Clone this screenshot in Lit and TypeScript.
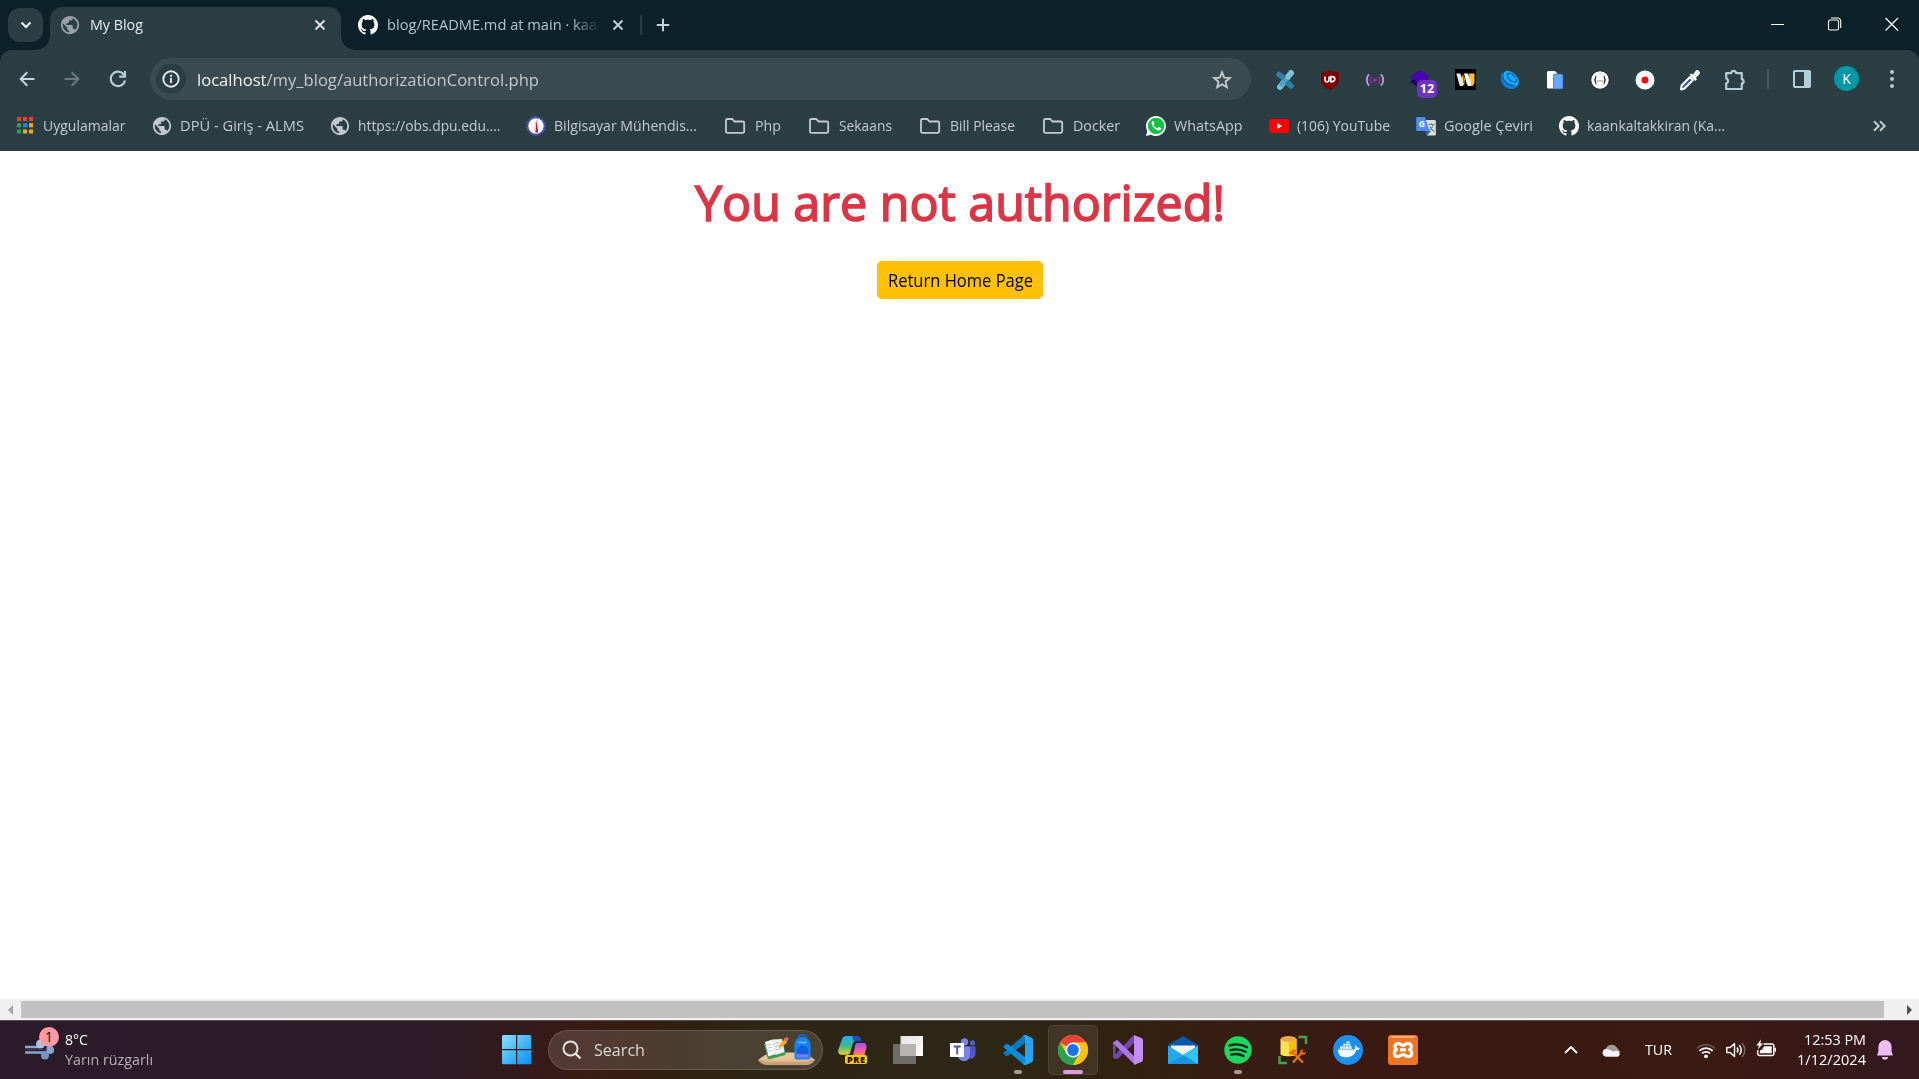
import { LitElement, html, css, svg } from "lit";

/** Single-line label whose text is condensed or expanded to a given width. */
class FitLabel extends LitElement {
  static properties = { width: { type: Number } };
  declare width: number;
  static styles = css`
    :host { display: block; white-space: nowrap; flex: none; }
    .text { display: inline-block; transform-origin: 0 50%; }
  `;
  firstUpdated() {
    const el = this.renderRoot.querySelector(".text") as HTMLElement;
    const natural = el.getBoundingClientRect().width;
    this.style.width = this.width + "px";
    if (natural) el.style.transform = `scaleX(${this.width / natural})`;
  }
  render() {
    return html`<span class="text"><slot></slot></span>`;
  }
}
customElements.define("fit-label", FitLabel);

const draw = (w: number, h: number, body: unknown, vb = `0 0 ${w} ${h}`) =>
  html`<svg width=${w} height=${h} viewBox=${vb} fill="none">${body}</svg>`;

const globe = (color: string) =>
  draw(20, 20, svg`<path fill=${color} d="M12 2C6.48 2 2 6.48 2 12s4.48 10 10 10 10-4.48 10-10S17.52 2 12 2zm-1 17.93c-3.95-.49-7-3.85-7-7.93 0-.62.08-1.21.21-1.79L9 15v1c0 1.1.9 2 2 2v1.93zm6.9-2.54c-.26-.81-1-1.39-1.9-1.39h-1v-3c0-.55-.45-1-1-1H8v-2h2c.55 0 1-.45 1-1V7h2c1.1 0 2-.9 2-2v-.41c2.93 1.19 5 4.06 5 7.41 0 2.08-.8 3.97-2.1 5.39z"/>`, "1 1 22 22");

const github = draw(20, 20, svg`<path fill="#fff" d="M8 0C3.58 0 0 3.58 0 8c0 3.54 2.29 6.53 5.47 7.59.4.07.55-.17.55-.38 0-.19-.01-.82-.01-1.49-2.01.37-2.53-.49-2.69-.94-.09-.23-.48-.94-.82-1.13-.28-.15-.68-.52-.01-.53.63-.01 1.08.58 1.23.82.72 1.21 1.87.87 2.33.66.07-.52.28-.87.51-1.07-1.78-.2-3.64-.89-3.64-3.95 0-.87.31-1.59.82-2.15-.08-.2-.36-1.02.08-2.12 0 0 .67-.21 2.2.82.64-.18 1.32-.27 2-.27s1.36.09 2 .27c1.53-1.04 2.2-.82 2.2-.82.44 1.1.16 1.92.08 2.12.51.56.82 1.27.82 2.15 0 3.07-1.87 3.75-3.65 3.95.29.25.54.73.54 1.48 0 1.07-.01 1.93-.01 2.2 0 .21.15.46.55.38A8.01 8.01 0 0 0 16 8c0-4.42-3.58-8-8-8z"/>`, "0 0 16 16");

const cross = (c: string) => draw(12, 12, svg`<path d="M1.5 1.5l9 9M10.5 1.5l-9 9" stroke=${c} stroke-width="1.9"/>`);
const folder = draw(24, 20, svg`<path d="M3 4.2a1.2 1.2 0 0 1 1.2-1.2h5l2.3 2.5h8.3a1.4 1.4 0 0 1 1.4 1.4v8.4a1.5 1.5 0 0 1-1.5 1.5H4.4A1.4 1.4 0 0 1 3 15.4z" stroke="#c6cad0" stroke-width="1.8"/>`);
const apps = draw(20, 20, svg`
  <path fill="#ea4335" d="M2 1h4v4H2zM8 1h4v4H8zM14 1h4v4h-4z"/>
  <path fill="#34a05a" d="M2 7.3h4v4H2zM2 13.6h4v4H2z"/><path fill="#1e88ff" d="M8 7.3h4v4H8z"/>
  <path fill="#f9ab00" d="M14 7.3h4v4h-4zM8 13.6h4v4H8zM14 13.6h4v4h-4z"/>`);
const university = draw(20, 20, svg`<circle cx="10" cy="10" r="8.7" fill="#fff" stroke="#4648a4" stroke-width="2"/>
  <circle cx="10" cy="10" r="9.2" stroke="#6c70c4" stroke-width="1" stroke-dasharray="1 2"/>
  <path d="M10.2 3.5l1 5 1 8H9.2l1-8z" fill="#d3122b"/><path d="M9.4 6l-.5 9" stroke="#c5c9de"/>`);
const whatsapp = draw(20, 20, svg`<path d="M0 20l1.3-5A10 10 0 1 1 5 18.7z" fill="#fff"/><circle cx="10.1" cy="9.9" r="8.2" fill="#11c143"/>
  <path d="M6.900 5c-1.200.6-1.700 2-1 3.600 1 2.600 3 4.700 5.600 5.700 1.700.6 3.300-.2 3.600-1.500.1-.5-.1-.7-.4-.9l-1.600-.8c-.4-.1-.6 0-.8.3l-.6.7c-.2.2-.4.2-.7.1-1.500-.7-2.500-1.600-3.300-2.900-.1-.3 0-.5.2-.7.4-.5.6-.8.4-1.200l-.7-1.800c-.1-.4-.3-.6-.7-.6z" fill="#fff"/>`);
const youtube = draw(20, 20, svg`<rect y="3" width="20" height="14" rx="3.2" fill="#f00"/><path d="M8 6.900l5.200 3.100L8 13.100z" fill="#fff"/>`);
const translate = draw(20, 20, svg`<path d="M8 4h10.500a1.300 1.300 0 0 1 1.300 1.300v13a1.300 1.300 0 0 1-1.300 1.300H11z" fill="#dcdfe2"/>
  <path d="M9.500 15H15l-4 4.600z" fill="#3a5bb8"/>
  <path d="M1.500 1H9l4.500 14H1.500A1.300 1.300 0 0 1 .2 13.700V2.300A1.300 1.300 0 0 1 1.500 1z" fill="#4f8df5"/>
  <path d="M12.500 8.500h6M15.500 7.200v1.300M17.300 8.500c-.6 2.600-2 4.600-4 6M13.900 10.500c1 2 2.300 3.500 4.300 5" stroke="#6d7f89" stroke-width="1.1"/>
  <text x="5.900" y="11.200" text-anchor="middle" class="gl">G</text>`);

const bookmarks: [unknown, string, number][] = [
  [apps, "Uygulamalar", 82.5],
  [globe("#c3c6cd"), "DPÜ - Giriş - ALMS", 124],
  [globe("#c3c6cd"), "https://obs.dpu.edu....", 142.5],
  [university, "Bilgisayar Mühendis...", 143],
  [folder, "Php", 26],
  [folder, "Sekaans", 53],
  [folder, "Bill Please", 65],
  [folder, "Docker", 47],
  [whatsapp, "WhatsApp", 68.5],
  [youtube, "(106) YouTube", 93],
  [translate, "Google Çeviri", 89],
  [github, "kaankaltakkiran (Ka...", 138],
];

const extensions = [
  draw(20, 22, svg`<path d="M16 4L5 18" stroke="#7dc0da" stroke-width="6" stroke-linecap="round"/>
    <path d="M4 5.500l4 3M12.500 13.500l3.500 3.500" stroke="#2f7fa5" stroke-width="5.5" stroke-linecap="round"/><path d="M11 10L5.500 17" stroke="#4ba3c7" stroke-width="4"/>`),
  draw(20, 22, svg`<path d="M10 1c2.500 1.700 5.500 2.300 9 2.500v7c0 5-4 8.300-9 10.500-5-2.200-9-5.500-9-10.500v-7C4.500 3.300 7.500 2.700 10 1z" fill="#800000"/>
    <path d="M5 7.500v3.200a2 2 0 0 0 4 0V7.500M10.800 7.600h1.500a2.500 2.500 0 0 1 0 5h-1.500z" stroke="#fff" stroke-width="1.6"/>`),
  draw(20, 20, svg`<circle cx="10" cy="10" r="1.9" fill="#9c27b0"/><path d="M6.800 6.500a5 5 0 0 0 0 7M13.200 6.500a5 5 0 0 1 0 7" stroke="#9c27b0" stroke-width="1.6"/>
    <path d="M4 4.300a8.500 8.500 0 0 0 0 11.400M16 4.300a8.500 8.500 0 0 1 0 11.400" stroke="#d59be6" stroke-width="1.7"/>`),
  html`<span class="badged">${draw(22, 22, svg`<path d="M11 6.500l10 6-10 7-10-7z" fill="#22006e"/><path d="M11 1l10 6.500-10 7-10-7z" fill="#4a00b4"/>`)}<b class="badge">12</b></span>`,
  draw(21, 21, svg`<path fill="#000" d="M0 0h21v21H0z"/><path d="M14 4.500h5.500v9.500l-2 3H15z" fill="#fbc02d"/><path d="M6 11l2-6 2 5-1 7z" fill="#fbc02d"/><path d="M1.300 4.500h4l3.200 9-.5 3.500H4.800z" fill="#e6e8ea"/><path d="M9 4.500h4l3 9-.5 3.500h-3.200z" fill="#fff"/><path d="M8.700 6v8M12.500 15v2" stroke="#000" stroke-width=".5"/>`),
  draw(20, 20, svg`<path d="M2.500 2C-1 7 .5 17 10 19c6 .5 9-3 9-7C15 16 3 12 2.500 2z" fill="#0b7fe0"/>
    <ellipse cx="11" cy="8.300" rx="9.200" ry="5.800" transform="rotate(42 11 8.300)" fill="#18a8f8"/>
    <ellipse cx="12" cy="7.600" rx="5.700" ry="3.200" transform="rotate(42 12 7.600)" stroke="#0b5fb5" stroke-width="1.2"/>
    <path d="M2 6.500c1.500 5 6 8.500 12.500 9" stroke="#12405f" stroke-width=".9"/>`),
  draw(18, 20, svg`<path d="M1 2.500A1.500 1.500 0 0 1 2.500 1H9l3 3v14.500H2.500A1.500 1.500 0 0 1 1 17z" fill="#fff"/><rect x="7.5" y="4" width="9.5" height="15" rx="1.5" fill="#67a8fb" stroke="#2c5fa8" stroke-width=".7"/>`),
  draw(20, 20, svg`<circle cx="10" cy="10" r="9.3" fill="#fff" stroke="#17191b" stroke-width="1"/><path d="M6.500 6.500c-1.500 0-1 1.500-1.200 2.500 0 .7-.6 1-1.200 1 .6 0 1.200.3 1.200 1 .2 1-.3 2.500 1.200 2.500M13.500 6.500c1.500 0 1 1.500 1.200 2.500 0 .7.6 1 1.200 1-.6 0-1.200.3-1.200 1-.2 1 .3 2.500-1.200 2.500" stroke="#222" stroke-width="1.2"/><path d="M7.300 11h1M9.500 11h1M11.700 11h1" stroke="#222" stroke-width="1.1"/>`),
  draw(20, 20, svg`<circle cx="10" cy="10" r="9.5" fill="#fff"/><circle cx="10" cy="10" r="3.5" fill="#f20d0d"/>`),
  draw(22, 22, svg`<path d="M2 20.500l.6-4L11 8l3 3-8.500 8.500z" fill="#3557c4" stroke="#fff" stroke-width="2" stroke-linejoin="round"/><path d="M10.500 5.500l2-1 1.300 1.200L16.500 2a2.500 2.500 0 0 1 3.700 3.500L16.800 8.700 18 10l-1.500 2z" fill="#fff"/>`),
  draw(24, 24, svg`<path d="M3.200 5.200h5.100a2.400 2.400 0 0 1 4.800 0h5.700v6a2.300 2.300 0 0 1 0 4.500v5.300H3.200v-5.600a2.600 2.600 0 0 0 0-5z" stroke="#b5cdd6" stroke-width="2.2" stroke-linejoin="round"/>`),
];

const winLogo = draw(30, 30, svg`<defs><linearGradient id="w" x1="0" y1="0" x2="1" y2="1"><stop stop-color="#86e2ff"/><stop offset="1" stop-color="#0a8ff5"/></linearGradient></defs>
  <path fill="url(#w)" d="M0 1.500A1.500 1.500 0 0 1 1.500 0H14v14H0zM15.200 0h12.600a1.500 1.500 0 0 1 1.500 1.500V14H15.200zM0 15.200h14v14H1.500A1.500 1.500 0 0 1 0 27.700zM15.200 15.200h14.100v12.500a1.500 1.500 0 0 1-1.500 1.500H15.200z"/>`);

const searchArt = draw(58, 32, svg`<path d="M0 26c5-4.500 11-7.500 17-7.500h22c7 0 13 3.500 18 7.500l-3 2H3z" fill="#e6c49c"/><path d="M0 26h57c-2 3-5 5-8 5H9c-4 0-7-2-9-5z" fill="#c9a077"/><path d="M3 25.700h50l-3 2.300H7z" fill="#dfb98b"/>
  <path d="M6 10l19-3.500 2.500 14.500-17.500 4.500z" fill="#3c9a4f"/><path d="M7 8l7.500-2.500 3 14.500-7 2.500z" fill="#fff"/><path d="M14.500 5.500L24 5l2.500 13-9 3z" fill="#eef0f4"/>
  <path d="M9 11l4.500-1.300M9.700 14.200l4.500-1.300M10.400 17.400l4.500-1.300M16.700 9.300l5-.8M17.300 12.500l5-.8M18 15.700l5-.8" stroke="#b4b9c0" stroke-width=".9"/>
  <path d="M21 14l.8-4 4.700-4.500 2.700 2.800-4.700 4.500z" fill="#f9a825"/><path d="M25.500 5.300l2-1.800a1.900 1.900 0 0 1 2.700 2.600l-2 2z" fill="#ef6a5c"/>
  <path d="M40.500 4.500a4 3.500 0 0 1 8 0" stroke="#1862c8" stroke-width="1.8"/><path d="M36.500 11a8 8 0 0 1 16 0v12.500a2 2 0 0 1-2 2h-12a2 2 0 0 1-2-2z" fill="#1485f2"/>
  <path d="M38.500 17a6 5.500 0 0 1 12 0v3h-12z" fill="#0f5fe0"/><path d="M38.500 20.500h12v3h-12z" fill="#8a74f0"/><path d="M40.500 8.500h8" stroke="#70c3ff" stroke-width="1.5"/>`);

const copilot = draw(30, 30, svg`<defs><linearGradient id="ca" x1="0" y1="0" x2="0" y2="1"><stop stop-color="#27a9f5"/><stop offset=".5" stop-color="#35b890"/><stop offset="1" stop-color="#e9d028"/></linearGradient>
  <linearGradient id="cb" x1="0" y1="0" x2="0" y2="1"><stop stop-color="#a44cf0"/><stop offset=".6" stop-color="#f0609a"/><stop offset="1" stop-color="#ff8a54"/></linearGradient></defs>
  <path d="M8.500 1H19c2.500 0 3.300 1.800 4 5h-5c-2 0-2.700 1-3.300 3l-2.300 8c-.7 2-1.600 2.700-3.400 2.700H4c-3 0-4.500-2-3.500-5.500L4 4.300C4.800 2 6.200 1 8.500 1z" fill="url(#ca)"/>
  <path d="M14 1h5c2.500 0 3.300 1.800 4 5h-5l-2 1z" fill="#1b4fc0"/>
  <path d="M19.500 8H25c3 0 4 2 3.300 5l-2 8H15l2-10c.5-2 1-3 2.500-3z" fill="url(#cb)"/>
  <rect x="7" y="20" width="22" height="9" rx="2" fill="#ffc90a"/><text x="18.200" y="27.700" text-anchor="middle" class="pre">PRE</text>`);
const taskView = draw(30, 28, svg`<defs><linearGradient id="tv" x1="0" y1="0" x2="1" y2="1"><stop stop-color="#e2e2e2"/><stop offset="1" stop-color="#fff"/></linearGradient></defs><path d="M0 8h23v20H0z" fill="#6d6c6a"/><path d="M7.500 0H30v20H7.500z" fill="url(#tv)"/><path d="M7.500 8H23v12H7.500z" fill="#b5b4b2"/>`);
const teams = draw(28, 24, svg`<circle cx="15.500" cy="4" r="3.700" fill="#7b83eb"/><circle cx="23.500" cy="5" r="2.700" fill="#5059c9"/><path d="M18 8.500h8.500V16a4.500 4.500 0 0 1-6 4.500z" fill="#5059c9"/><path d="M9 8.500h12V17c0 8-12 8-12 0z" fill="#7b83eb"/><path d="M1 5h14v14H1z" fill="#fff"/><path d="M4.700 8.500h7M8.200 8.500v8" stroke="#4b53bc" stroke-width="1.9"/>`);
const vscode = draw(30, 30, svg`<path d="M22 0v8L5.500 20.600 3 21 .9 19a1 1 0 0 1 0-1.600L20 1z" fill="#0b78c0"/><path d="M22 30v-8L5.500 9.400 3 9 .9 11a1 1 0 0 0 0 1.600L20 29z" fill="#0d8bdb"/><path d="M20 1.200c.8-1 1.800-1.500 2.800-1.100l6 2.700A2 2 0 0 1 30 4.600v20.800a2 2 0 0 1-1.200 1.800l-6 2.700c-1 .4-2-.1-2.800-1.100l2-1V2.200z" fill="#27a3f2"/>`);
const chrome = draw(30, 30, svg`<circle cx="15" cy="15" r="15" fill="#fbc116"/><path d="M15 15L2 7.500A15 15 0 0 1 28 7.500L15 8z" fill="#ea4335"/><path d="M2 7.500A15 15 0 0 0 15 30l6.500-11.300L15 22 8.500 18.800z" fill="#2da24d"/><path d="M15 7.500h13A15 15 0 0 1 15 30l6.500-11.300z" fill="#fbc116"/><circle cx="15" cy="15" r="7.500" fill="#fff"/><circle cx="15" cy="15" r="5.900" fill="#1a73e8"/>`);
const visualStudio = draw(30, 30, svg`<path d="M0 8a1.500 1.500 0 0 1 .9-1.400L2.500 6v18L.9 23.400A1.500 1.500 0 0 1 0 22z" fill="#6f46a8"/><path d="M0 22L20.500 0 22 7 4.500 24 2 24z" fill="#7347b1"/><path d="M0 8l4-3.200L22 22v8z" fill="#a878e6"/><path d="M21 0l7.700 3.300A2 2 0 0 1 30 5v20a2 2 0 0 1-1.300 1.800L21 30z" fill="#c78cf8"/>`);
const mail = draw(30, 28, svg`<path d="M15 0l15 9v8H0V9z" fill="#0b58a8"/><path d="M3 9.500h24v12H3z" fill="#f2f2f2"/><path d="M0 9.500l15 9.500L0 28z" fill="#28a8ea"/><path d="M30 9.500L0 28h30z" fill="#35c3f3"/><path d="M0 28l15-9 15 9z" fill="#1b93e3"/>`);
const spotify = draw(28, 28, svg`<circle cx="14" cy="14" r="13.700" fill="#1ed760"/><path d="M5.500 9.500c6-1.800 12.500-1.300 17.500 1.700M6.500 14.200c5-1.400 10.500-.9 15 1.600M7.300 18.600c4.200-1 8.600-.6 12.200 1.500" stroke="#12231a" stroke-width="2.4" stroke-linecap="round"/>`);
const ssms = draw(30, 30, svg`<path d="M20.500 2H28v7M1.500 21v7H9" stroke="#4a9e4c" stroke-width="2.5"/><path d="M2.500 4v15c0 3 16 3 16 0V4z" fill="#ffe05a"/><path d="M11 6v15c4 0 7.500-.8 7.500-2V4z" fill="#f5c400"/><ellipse cx="10.500" cy="4" rx="8" ry="2.900" fill="#f0a850"/>
  <path d="M15 27.500l8.500-9.500M14 17l11 10.500" stroke="#e8700c" stroke-width="2.4"/><path d="M10.500 18l5-4 4 1-4.500 5z" fill="#e8700c"/><path d="M22 18c-.5-2 1-4 3.500-3.500L24 16.500l2 1.500 2-1.500c.2 2.500-2.500 4-4.500 3z" fill="#e8700c"/>`);
const docker = draw(30, 30, svg`<circle cx="15" cy="15" r="15" fill="#1d8fec"/><path d="M5 14.500h15.500c1 0 1.500-.5 1.500-1.500-.5-1 0-2 .8-2.800.8.800 1 1.600 1 2.300 1.200-.2 2.200 0 3 .5-.5 1.500-1.800 2-3.500 2-1.600 5-5 7.300-10.300 7.300S5 20 5 14.500z" fill="#fff"/><path d="M7 11.200h2.600v2.700H7zM10 11.200h2.600v2.700H10zM13 11.200h2.600v2.700H13zM16 11.200h2.600v2.700H16zM10 8.700h2.600v2H10zM13 8.700h2.600v2H13zM13.500 6.500h3v1.700h-3zM16 8.700h1.600v2H16z" fill="#e8f3fd"/>`);
const xampp = draw(30, 30, svg`<rect width="30" height="30" rx="3" fill="#ee7622"/><path d="M2 1h26l-2 2H4z" fill="#f9b27c"/><path d="M9.500 8.500c3-.5 4 2 5.500 2s3-2.500 5.500-2c3.500.5 3.500 4.500 1 6 3 1.500 3 6.500-.5 7-2.800.5-4.500-2-6-2s-3.500 2.500-6 2c-3.500-.5-3.500-5.500-.5-7-2.500-1.500-2-5.500 1-6zM12 14.800h6" stroke="#fff" stroke-width="3.2" stroke-linejoin="round"/>`);

const tasks: [unknown, string][] = [
  [copilot, ""], [taskView, ""], [teams, ""], [vscode, "running"], [chrome, "active"], [visualStudio, ""],
  [mail, ""], [spotify, "running"], [ssms, ""], [docker, ""], [xampp, ""],
];

class AppRoot extends LitElement {
  static styles = css`
    :host { display: flex; flex-direction: column; width: 1919px; height: 1079px; overflow: hidden; background: #fff;
      font-family: "Open Sans", "Noto Sans", sans-serif; font-size: 14.5px; line-height: 20px; color: #c3ccd0; }
    * { box-sizing: border-box; }
    svg { display: block; flex: none; overflow: visible; }
    .tabs { height: 50px; background: #0c2228; display: flex; align-items: flex-start; padding: 7px 0 0 8px; flex: none; }
    .tab-search { width: 35px; height: 34px; margin-top: 1px; border-radius: 12px; background: #2a3e44; display: grid; place-items: center; }
    .tab { display: flex; align-items: center; height: 43px; padding-top: 9px; padding-bottom: 16px; }
    .tab.active { position: relative; margin-left: 7px; width: 291px; background: #2a3e44; border-radius: 12px 12px 0 0; padding-left: 10px; padding-right: 15px; color: #e8edef; }
    .tab.active::before, .tab.active::after { content: ""; position: absolute; bottom: 0; width: 14px; height: 14px; }
    .tab.active::before { left: -14px; background: radial-gradient(circle at 0 0, transparent 13.5px, #2a3e44 14px); }
    .tab.active::after { right: -14px; background: radial-gradient(circle at 100% 0, transparent 13.5px, #2a3e44 14px); }
    .tab .name { margin-left: 10px; }
    .grow { flex: 1; }
    .tab.idle { padding-left: 17px; color: #adc6cf; width: 299px; }
    .tab.idle .name { margin-left: 9px; mask-image: linear-gradient(90deg, #000 184px, transparent 213px); }
    .tab.idle .x { margin-left: 15px; }
    .tab-sep { width: 2px; height: 20px; margin-top: 8px; background: #2a3e44; border-radius: 1px; }
    .plus { margin: 11px 0 0 14px; }
    .controls { display: flex; gap: 43px; padding: 10px 20px 0 0; }
    .chrome { background: #0c2228; flex: none; height: 101px; }
    .panel { background: #2a3e44; border-radius: 12px 12px 0 0; height: 101px; display: flex; flex-direction: column; }
    .toolbar { display: flex; align-items: center; height: 58px; padding: 0 5px; }
    .nav { width: 45px; display: grid; place-items: center; }
    .nav.reload { padding-left: 1px; }
    .omnibox { margin-left: 10px; width: 1102px; height: 42px; border-radius: 21px; background: #3a4b51; display: flex; align-items: center; padding: 0 19px 0 6px; font-size: 17.2px; color: #c1c9cc; }
    .omnibox fit-label, .omnibox .star { padding-top: 1px; }
    .omnibox em { font-style: normal; color: #eef2f3; }
    .info { width: 30px; height: 30px; border-radius: 50%; background: #2a3e44; display: grid; place-items: center; margin-right: 11px; }
    .exts { display: flex; margin-left: 11.5px; margin-right: .5px; padding-top: 1px; }
    .ext { width: 45px; height: 30px; display: grid; place-items: center; flex: none; }
    .badged { position: relative; display: block; }
    .badge { position: absolute; left: 8px; top: 11px; width: 20px; height: 18px; border-radius: 5px; background: #6b35c0; color: #fff; font-size: 12.5px; line-height: 18px; text-align: center; }
    .vsep { width: 2px; height: 20px; margin-left: 9px; margin-right: 10px; background: #43585f; }
    .avatar { width: 25px; height: 25px; border-radius: 50%; background: #0097a7; color: #fff; display: grid; place-items: center; font: 14px/25px "Open Sans", sans-serif; margin-top: -1px; }
    .bookmarks { display: flex; align-items: center; height: 35px; gap: 26px; padding: 0 33px 0 15px; }
    .bookmark { display: flex; align-items: center; gap: 8px; height: 22px; }
    .gl { font: 700 8.5px "Open Sans", sans-serif; fill: #fff; }
    .page { flex: 1; background: #fff; display: flex; flex-direction: column; align-items: center; padding-top: 21px; }
    h1 { margin: 0; font-size: 50px; line-height: 60px; font-weight: 400; color: #dc3545; -webkit-text-stroke: 1.6px #dc3545; }
    .home { margin-top: 29px; width: 166px; height: 38px; border: 0; border-radius: 5px; background: #ffc107; color: #000; font: 18px/24px "Open Sans", sans-serif; padding: 0 0 0 11px; text-align: left; display: flex; align-items: center; }
    .scroll { height: 21px; flex: none; background: #f0f0f0; display: flex; align-items: center; padding: 0 7px 0 8px; }
    .thumb { width: 1863px; height: 17px; background: #c1c1c1; margin-left: 8px; }
    .scroll .right { margin-left: auto; }
    .taskbar { height: 59px; flex: none; border-top: 1px solid #5a4a4c; display: flex; align-items: center; color: #fff;
      background: linear-gradient(90deg, #2b1b2a 0, #2d1a26 430px, #331a1c 520px, #3a1c14 580px, #32200f 660px, #2e2614 760px, #2e2715 1000px, #33210f 1140px, #371d13 1250px, #3a1912 1400px, #3b1a12 1720px, #331820 1919px); }
    .weather { display: flex; align-items: center; padding-left: 25px; width: 502px; }
    .wicon { position: relative; width: 30px; height: 22px; margin-right: 10px; }
    .count { position: absolute; left: 14px; top: -12px; width: 20px; height: 20px; border-radius: 50%; background: #ff99a4; color: #111; font-size: 14.5px; line-height: 20px; text-align: center; }
    .muted { color: #b9b1b9; }
    .search { margin-left: 16px; width: 275px; height: 40px; border-radius: 20px; border: 1px solid #ffffff26; background: #ffffff22; display: flex; align-items: center; padding: 0 6px 0 13px; font-size: 17.2px; color: #dcd8d3; }
    .search fit-label { margin-left: 12px; }
    .tasks { display: flex; gap: 5px; margin-left: 5px; }
    .task { position: relative; width: 50px; height: 50px; border-radius: 5px; display: grid; place-items: center; }
    .task.active { background: #ffffff14; box-shadow: inset 0 0 0 1px #ffffff12; }
    .task.running::after, .task.active::after { content: ""; position: absolute; left: 21px; bottom: 1px; width: 8px; height: 4px; border-radius: 2px; background: #a29c93; }
    .task.active::after { left: 15px; width: 20px; background: #dc9ce2; }
    .pre { font: 800 9px "Open Sans", sans-serif; fill: #1a1408; letter-spacing: .6px; }
    .tray { margin-left: auto; display: flex; align-items: center; padding-right: 26px; }
    .cloud { margin-left: 24px; margin-right: 23px; }
    .net { display: flex; align-items: center; gap: 10px; margin-left: 24px; }
    .clock { display: flex; flex-direction: column; align-items: flex-end; margin-left: 20px; margin-right: 11px; }
  `;

  render() {
    return html`
      <header class="tabs">
        <div class="tab-search">${draw(12, 8, svg`<path d="M1.500 1.500L6 6l4.500-4.500" stroke="#e8f0f2" stroke-width="2.2"/>`)}</div>
        <div class="tab active">${globe("#9aa0a8")}<fit-label class="name" width="53">My Blog</fit-label><span class="grow"></span>${cross("#dfe6e8")}</div>
        <div class="tab idle">${github}<fit-label class="name" width="210">blog/README.md at main · kaa</fit-label><span class="x">${cross("#c0d3da")}</span></div>
        <div class="tab-sep"></div>
        <div class="plus">${draw(14, 14, svg`<path d="M7 .8v12.400M.8 7h12.400" stroke="#c0d3da" stroke-width="2"/>`)}</div>
        <span class="grow"></span>
        <div class="controls">
          ${draw(14, 14, svg`<path d="M0 7.500h13" stroke="#fff"/>`)}
          ${draw(14, 14, svg`<rect x=".5" y="3" width="10" height="10" rx="1.5" stroke="#fff" stroke-width="1.1"/><path d="M3 1h6.500A3 3 0 0 1 12.700 4v7" stroke="#fff" stroke-width="1.1"/>`)}
          ${draw(14, 14, svg`<path d="M.5 1l12.500 12.500M13 1L.5 13.500" stroke="#fff" stroke-width="1.2"/>`)}
        </div>
      </header>
      <div class="chrome"><div class="panel">
        <div class="toolbar">
          <div class="nav">${draw(16, 16, svg`<path d="M15.500 8H1.800M8.300 1.300L1.600 8l6.700 6.700" stroke="#c0d6de" stroke-width="2"/>`)}</div>
          <div class="nav">${draw(16, 16, svg`<path d="M.5 8h13.700M7.700 1.300L14.400 8l-6.700 6.700" stroke="#6b7b81" stroke-width="2"/>`)}</div>
          <div class="nav reload">${draw(18, 18, svg`<path d="M15.300 5.400A7.200 7.200 0 1 0 16 10.500" stroke="#b8ced6" stroke-width="2.1"/><path d="M16 1v5.600h-5.800" stroke="#b8ced6" stroke-width="2.1"/>`)}</div>
          <div class="omnibox">
            <div class="info">${draw(18, 18, svg`<circle cx="9" cy="9" r="7.7" stroke="#e4e9eb" stroke-width="1.9"/><path d="M9 8v5M9 4.700v2" stroke="#e4e9eb" stroke-width="1.9"/>`)}</div>
            <fit-label width="342"><em>localhost</em>/my_blog/authorizationControl.php</fit-label>
            <span class="grow"></span>
            <span class="star">${draw(20, 20, svg`<path d="M10 2.200l2.200 5.400 5.700.4-4.400 3.700 1.400 5.600-4.900-3-4.900 3 1.400-5.600L2.100 8l5.700-.4z" stroke="#c5cbce" stroke-width="1.8"/>`)}</span>
          </div>
          <div class="exts">${extensions.map((e) => html`<div class="ext">${e}</div>`)}</div>
          <div class="vsep"></div>
          <div class="ext">${draw(20, 20, svg`<rect x="2" y="2" width="16" height="16" rx="1" stroke="#b5cdd6" stroke-width="2"/><path d="M12 2h6.500v16H12z" fill="#b5cdd6"/>`)}</div>
          <div class="ext"><div class="avatar">K</div></div>
          <div class="ext">${draw(6, 20, svg`<circle cx="3" cy="3" r="2" fill="#b5cdd6"/><circle cx="3" cy="10" r="2" fill="#b5cdd6"/><circle cx="3" cy="17" r="2" fill="#b5cdd6"/>`)}</div>
        </div>
        <div class="bookmarks">
          ${bookmarks.map(([icon, text, w]) => html`<div class="bookmark">${icon}<fit-label width=${w}>${text}</fit-label></div>`)}
          <span class="grow"></span>
          ${draw(13, 12, svg`<path d="M1 1.300L5.700 6 1 10.700M7 1.300L11.700 6 7 10.700" stroke="#c6cdd0" stroke-width="2"/>`)}
        </div>
      </div></div>
      <main class="page">
        <h1><fit-label width="530">You are not authorized!</fit-label></h1>
        <button class="home"><fit-label width="145">Return Home Page</fit-label></button>
      </main>
      <div class="scroll">
        ${draw(5, 10, svg`<path d="M5 0v10L0 5z" fill="#a3a3a3"/>`)}<div class="thumb"></div><span class="right">${draw(5, 10, svg`<path d="M0 0v10l5-5z" fill="#505050"/>`)}</span>
      </div>
      <footer class="taskbar">
        <div class="weather">
          <div class="wicon">${draw(30, 22, svg`<path d="M0 8h15M0 13.500h21" stroke="#86a9d2" stroke-width="2.6"/><circle cx="15.500" cy="5" r="4.500" fill="#a9c4e4"/><circle cx="25" cy="11" r="4" fill="#86a9d2"/><circle cx="20" cy="16.500" r="4" fill="#7397c0"/><path d="M0 10.500h22" stroke="#3a3550" stroke-width="1.4"/>`)}<span class="count">1</span></div>
          <div><fit-label width="23">8°C</fit-label><fit-label class="muted" width="88">Yarın rüzgarlı</fit-label></div>
        </div>
        ${winLogo}
        <div class="search">
          ${draw(20, 20, svg`<circle cx="8.500" cy="8.500" r="7" stroke="#e6e3e0" stroke-width="2"/><path d="M13.500 13.500l5 5" stroke="#e6e3e0" stroke-width="2.4"/>`)}
          <fit-label width="51">Search</fit-label><span class="grow"></span>${searchArt}
        </div>
        <div class="tasks">${tasks.map(([icon, state]) => html`<div class="task ${state}">${icon}</div>`)}</div>
        <div class="tray">
          ${draw(14, 10, svg`<path d="M1 8l6-6 6 6" stroke="#fff" stroke-width="1.8"/>`)}
          <span class="cloud">${draw(20, 14, svg`<path d="M4 6a6 5.500 0 0 1 11-1.500L18.500 9H3z" fill="#a59692"/><path d="M4.200 13.800a4 4 0 1 1 1.500-7.800l5.800 2.600 3-1.200a3.400 3.400 0 0 1 1.500 6.400z" fill="#f5f3f3"/>`)}</span>
          <fit-label width="27">TUR</fit-label>
          <div class="net">
            ${draw(20, 18, svg`<path d="M.8 7.500a13 13 0 0 1 18.400 0" stroke="#6c5450" stroke-width="1.6"/><path d="M3.300 9.900a9.500 9.500 0 0 1 13.400 0M5.900 12.500a5.800 5.800 0 0 1 8.200 0" stroke="#fff" stroke-width="1.7"/><circle cx="10" cy="15.300" r="1.9" fill="#fff"/>`)}
            ${draw(20, 18, svg`<path d="M.8 6.500h3.400L8.500 2.500v13L4.200 11.500H.8z" stroke="#fff" stroke-width="1.4" stroke-linejoin="round"/><path d="M11 6.500a4 4 0 0 1 0 5M13.300 4.200a7 7 0 0 1 0 9.600" stroke="#fff" stroke-width="1.5"/><path d="M16 2a10 10 0 0 1 0 14" stroke="#7b625d" stroke-width="1.5"/>`)}
            ${draw(21, 18, svg`<path d="M7.500 3H16a1.800 1.800 0 0 1 1.800 1.800v8A1.800 1.800 0 0 1 16 14.600H3.500A2 2 0 0 1 1.700 12.800V9" stroke="#fff" stroke-width="1.5"/><path d="M8 5.300h7.700v7H3.900V9.800L6.500 8z" fill="#fff"/><path d="M18.500 6.800h1.500v4h-1.500z" fill="#fff"/><path d="M5-1.500L.3 4.500H3L1.800 8.500 7 2.500H4.300z" fill="#fff"/>`)}
          </div>
          <div class="clock"><fit-label width="62">12:53 PM</fit-label><fit-label width="69">1/12/2024</fit-label></div>
          ${draw(16, 20, svg`<path d="M8 0a6.600 6.600 0 0 1 6.600 6.600v4.900L16 15.500H0l1.400-4V6.600A6.600 6.600 0 0 1 8 0z" fill="#efbdf3"/><path d="M5 17h6a3 2.800 0 0 1-6 0z" fill="#efbdf3"/>`)}
        </div>
      </footer>
    `;
  }
}
customElements.define("app-root", AppRoot);
